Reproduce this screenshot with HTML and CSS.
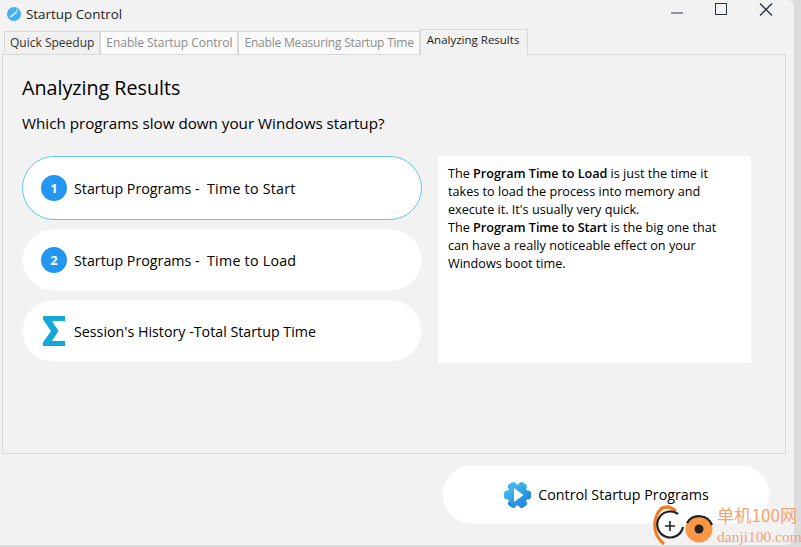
FILE: index.html
```html
<!DOCTYPE html>
<html lang="en">
<head>
<meta charset="utf-8">
<title>Startup Control</title>
<link rel="stylesheet" href="styles.css">
</head>
<body>
<div class="window">
  <header class="titlebar">
    <div class="title">
      <svg class="app-icon" width="14" height="14" viewBox="0 0 14 14"><circle cx="7" cy="7" r="7" fill="#3fb0f3"/><path d="M4 9.500L9.500 5" stroke="#fff" stroke-width="1.600" stroke-linecap="round"/><path d="M9 2.200L11 3.600" stroke="#fff" stroke-width="1"/></svg>
      <span>Startup Control</span>
    </div>
    <div class="controls">
      <svg width="14" height="14" viewBox="0 0 14 14"><path d="M2 11H14" stroke="#2b3442" stroke-width="1"/></svg>
      <svg width="14" height="14" viewBox="0 0 14 14"><rect x="1.500" y="1.500" width="11" height="11" fill="none" stroke="#2b3442"/></svg>
      <svg width="14" height="14" viewBox="0 0 14 14"><path d="M1 1.500L13 13.500M13 1.500L1 13.500" stroke="#2b3442" stroke-width="1.300"/></svg>
    </div>
  </header>
  <nav class="tabs">
    <div class="tab first">Quick Speedup</div>
    <div class="tab dim short">Enable Startup Control</div>
    <div class="tab dim long">Enable Measuring Startup Time</div>
    <div class="tab active">Analyzing Results</div>
  </nav>
  <main class="panel">
    <h1>Analyzing Results</h1>
    <p class="question">Which programs slow down your Windows startup?</p>
    <div class="columns">
      <div class="options">
        <button class="pill selected"><span class="badge">1</span><span>Startup Programs -&nbsp; <span class="wide">Time to Start</span></span></button>
        <button class="pill"><span class="badge">2</span><span>Startup Programs -&nbsp; <span class="wide">Time to Load</span></span></button>
        <button class="pill"><svg class="sigma" width="22" height="30" viewBox="0 0 22 30"><path d="M0 0H22V5H9L15.500 15L9 25H22V30H0V26.500L8 15L0 3.500Z" fill="#12a9d8"/></svg>Session's History -Total Startup Time</button>
      </div>
      <div class="info">The <b>Program Time to Load</b> is just the time it takes to load the process into memory and execute it. It's usually very quick.<br>The <b>Program Time to Start</b> is the big one that can have a really noticeable effect on your Windows boot time.</div>
    </div>
  </main>
  <footer class="footer">
    <button class="pill cta"><svg width="27" height="26" viewBox="-13.500 -13 27 26"><defs><linearGradient id="g" gradientUnits="userSpaceOnUse" x1="-11" y1="-11" x2="11" y2="11"><stop offset="0" stop-color="#4cc6ee"/><stop offset="1" stop-color="#1a7cdb"/></linearGradient></defs><g fill="url(#g)"><rect x="-13.500" y="-4.500" width="27" height="9" rx="3"/><rect x="-13.500" y="-4.500" width="27" height="9" rx="3" transform="rotate(60)"/><rect x="-13.500" y="-4.500" width="27" height="9" rx="3" transform="rotate(120)"/><circle r="10.500"/></g><path d="M-3.500-7L6 0L-3.500 7Z" fill="#fff"/></svg>Control Startup Programs</button>
  </footer>
</div>
<div class="watermark">
  <svg class="mark-logo" width="66" height="44" viewBox="0 0 66 44"><path d="M18 4Q6 3 3 18Q1 32 12 41" fill="none" stroke="#f47a20" stroke-width="3"/><path d="M8 6Q16 1 24 8" fill="none" stroke="#f47a20" stroke-width="3"/><path d="M26 11A13 13 0 1 0 31 24" fill="#fff" stroke="#222" stroke-width="2.200"/><path d="M13 23H23M18 18V28" stroke="#222" stroke-width="1.600"/><circle cx="47" cy="26" r="13.500" fill="#f99746"/><path d="M35 20A14 14 0 0 1 60 22" fill="none" stroke="#222" stroke-width="2.200"/><circle cx="47" cy="26" r="4.500" fill="#222"/></svg>
  <div class="mark-cn">单机100网</div>
  <div class="mark-url">danji100.com</div>
</div>
</body>
</html>
```
FILE: styles.css
```css
* { box-sizing: border-box; }
html, body { margin: 0; height: 100%; }
body { width: 801px; height: 547px; background: #dcdcdc; overflow: hidden; position: relative; font-family: "Open Sans", sans-serif; color: #000; }
.window { width: 794px; height: 545px; background: #f2f2f2; border-radius: 0 6px 8px 0; display: flex; flex-direction: column; padding: 0 0 0 2px; }
.titlebar { height: 29px; display: flex; justify-content: space-between; align-items: flex-start; flex: none; }
.title { display: flex; align-items: center; gap: 5px; padding: 5px 0 0 5px; font-size: 13.4px; line-height: 18px; color: #222; }
.controls { display: flex; gap: 31px; padding: 2px 21px 0 0; }
.tabs { display: flex; height: 25px; flex: none; padding-left: 2px; align-items: flex-end; position: relative; z-index: 1; }
.tab { height: 23px; border: 1px solid #d9d9d9; border-bottom: 0; padding: 0 5px; font-size: 12px; line-height: 21px; white-space: nowrap; }
.tab.first { background: #f0f0f0; color: #333; }
.tab.dim { background: #fafafa; color: #8c8c8c; }
.tab.short { letter-spacing: -0.04px; }
.tab.long { letter-spacing: -0.2px; }
.tab.active { height: 26px; background: #f2f2f2; color: #222; font-size: 11.5px; line-height: 20px; margin-bottom: -1px; padding: 0 8px 0 6px; }
.panel { width: 784px; height: 400px; flex: none; border: 1px solid #d9d9d9; padding: 19px 19px 0 19px; }
h1 { margin: 0; font-size: 19.7px; font-weight: 400; line-height: 28px; }
.question { margin: 10px 0 0; font-size: 15.2px; line-height: 22px; }
.columns { display: flex; gap: 16px; margin-top: 22px; }
.options { display: flex; flex-direction: column; gap: 9px; width: 400px; }
.pill { display: flex; align-items: center; border: 1px solid #f7f7f7; background: #fff; border-radius: 31px; height: 62px; padding: 0 0 0 18px; font: inherit; font-size: 14.25px; color: #000; gap: 7px; text-align: left; }
.pill.selected { border-color: #64c4f6; height: 64px; border-radius: 32px; }
.wide { letter-spacing: 0.25px; }
.badge { width: 26px; height: 26px; border-radius: 50%; background: #2296f3; color: #fff; font-weight: 700; font-size: 13px; display: flex; align-items: center; justify-content: center; flex: none; }
.sigma { flex: none; margin: 0 2px; }
.info { width: 313px; height: 207px; background: #fff; padding: 8px 28px 8px 10px; font-size: 12.65px; line-height: 18px; }
.info b { font-weight: 600; letter-spacing: -0.05px; }
.footer { flex: 1; display: flex; justify-content: flex-end; padding: 11px 24px 0 0; }
.cta { width: 328px; height: 59px; justify-content: center; padding: 0 0 0 1px; gap: 7px; border-radius: 30px; }
.watermark { position: absolute; left: 652px; top: 503px; width: 149px; height: 44px; }
.mark-logo { display: block; }
.mark-cn { position: absolute; left: 65px; top: 0; font-family: "Noto Sans CJK SC", sans-serif; font-size: 17.2px; line-height: 24px; color: #f4a372; white-space: nowrap; }
.mark-url { position: absolute; left: 65px; top: 25px; font-family: "Liberation Serif", serif; font-size: 15.5px; line-height: 17px; color: #f4a372; white-space: nowrap; }
```
